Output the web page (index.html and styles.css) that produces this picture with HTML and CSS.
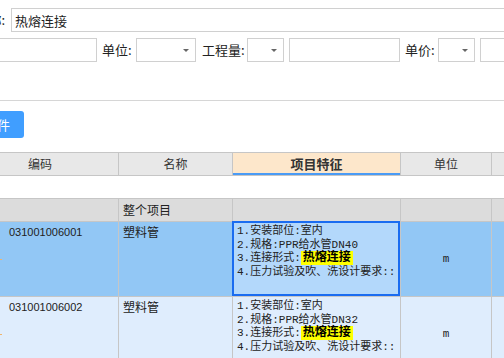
FILE: index.html
```html
<!DOCTYPE html>
<html lang="zh-CN">
<head>
    <meta charset="UTF-8">
    <meta name="viewport" content="width=device-width, initial-scale=1.0">
    <title>清单项目特征</title>
    <link rel="stylesheet" href="styles.css">
</head>
<body>
    <div class="page">
        <div class="form">
            <div class="form-row">
                <label class="lbl lbl-name">项目名称:</label>
                <input class="field field-grow" type="text" value="热熔连接">
            </div>
            <div class="form-row">
                <input class="field f-spec" type="text">
                <label class="lbl l-unit">单位:</label>
                <div class="select s-unit"><span class="caret"></span></div>
                <label class="lbl l-qty">工程量:</label>
                <div class="select s-small"><span class="caret"></span></div>
                <input class="field f-qty" type="text">
                <label class="lbl l-price">单价:</label>
                <div class="select s-small"><span class="caret"></span></div>
                <input class="field field-grow f-price" type="text">
            </div>
        </div>

        <div class="divider"></div>

        <div class="toolbar">
            <button class="btn" type="button">导入文件</button>
        </div>

        <div class="grid">
            <div class="grid-row grid-head">
                <div class="cell c-code">编码</div>
                <div class="cell c-name">名称</div>
                <div class="cell c-feat is-sorted">项目特征</div>
                <div class="cell c-unit">单位</div>
                <div class="cell c-more"></div>
            </div>
            <div class="grid-filter"></div>
            <div class="grid-row grid-group">
                <div class="cell c-code"></div>
                <div class="cell c-name">整个项目</div>
                <div class="cell c-feat"></div>
                <div class="cell c-unit"></div>
                <div class="cell c-more"></div>
            </div>
            <div class="grid-row grid-item is-selected">
                <div class="cell c-code">031001006001</div>
                <div class="cell c-name">塑料管</div>
                <div class="cell c-feat is-current">
                    <div>1.安装部位:室内</div>
                    <div>2.规格:PPR给水管DN40</div>
                    <div>3.连接形式:<mark class="hit">热熔连接</mark></div>
                    <div>4.压力试验及吹、洗设计要求::</div>
                </div>
                <div class="cell c-unit">m</div>
                <div class="cell c-more"></div>
            </div>
            <div class="grid-row grid-item">
                <div class="cell c-code">031001006002</div>
                <div class="cell c-name">塑料管</div>
                <div class="cell c-feat">
                    <div>1.安装部位:室内</div>
                    <div>2.规格:PPR给水管DN32</div>
                    <div>3.连接形式:<mark class="hit">热熔连接</mark></div>
                    <div>4.压力试验及吹、洗设计要求::</div>
                </div>
                <div class="cell c-unit">m</div>
                <div class="cell c-more"></div>
            </div>
        </div>
    </div>
</body>
</html>
```

FILE: styles.css
```css
/* 清单编辑面板 */
body {
    margin: 0;
    padding: 0;
    background: #fff;
    color: #222;
    font-family: "Noto Sans CJK SC", "Liberation Sans", sans-serif;
    overflow: hidden;
}
.page {
    width: 660px;
    margin-left: -60px;
}

/* 表单 */
.form {
    padding-top: 8px;
}
.form-row {
    display: flex;
    align-items: center;
    height: 24px;
}
.form-row + .form-row {
    margin-top: 6px;
}
.lbl {
    font-size: 13px;
    line-height: 24px;
    white-space: nowrap;
}
.lbl-name {
    width: 65px;
    margin-right: 6px;
    text-align: right;
}
.field {
    height: 24px;
    box-sizing: border-box;
    border: 1px solid #d0d0d0;
    padding: 0 3px;
    font: 13px "Noto Sans CJK SC", sans-serif;
    color: #222;
    outline: none;
}
.field-grow {
    flex: 1;
    min-width: 0;
}
.f-spec {
    width: 157px;
}
.l-unit {
    margin-left: 5px;
    width: 34px;
}
.l-qty {
    margin-left: 6px;
    width: 45px;
}
.l-price {
    margin-left: 5px;
    width: 33px;
}
.f-qty {
    width: 111px;
    margin-left: 5px;
}
.f-price {
    margin-left: 5px;
}
.select {
    height: 24px;
    box-sizing: border-box;
    border: 1px solid #d0d0d0;
    display: flex;
    align-items: center;
    justify-content: flex-end;
    padding-right: 6px;
}
.s-unit {
    width: 60px;
}
.s-small {
    width: 37px;
}
.caret {
    width: 0;
    height: 0;
    border-left: 3px solid transparent;
    border-right: 3px solid transparent;
    border-top: 3px solid #666;
}

.divider {
    height: 1px;
    margin-top: 38px;
    background: #d6d6d6;
}

/* 按钮 */
.toolbar {
    margin-top: 10px;
    padding-left: 4px;
}
.btn {
    height: 27px;
    padding: 0 14px;
    border: none;
    border-radius: 3px;
    background: #409eff;
    color: #fff;
    font: 13px "Noto Sans CJK SC", sans-serif;
}

/* 表格 */
.grid {
    margin-top: 14px;
    margin-left: 20px;
}
.grid-row {
    display: flex;
}
.cell {
    box-sizing: border-box;
    border-right: 1px solid #c6c6c6;
    border-bottom: 1px solid #c6c6c6;
    flex: none;
    overflow: hidden;
    position: relative;
}
.c-code { width: 159px; }
.c-name { width: 114px; }
.c-feat { width: 168px; }
.c-unit { width: 91px; }
.c-more { width: 100px; }

.grid-head .cell {
    height: 24px;
    border-top: 1px solid #c6c6c6;
    background: #e8e8e8;
    font-size: 12px;
    line-height: 22px;
    color: #333;
    text-align: center;
}
.grid-head .c-code {
    text-align: left;
    padding-left: 68px;
}
.grid-head .is-sorted {
    background: #fde7cb;
    font-weight: bold;
    font-size: 13px;
    box-shadow: inset 0 -2px 0 #4a9bf5;
}

.grid-filter {
    height: 23px;
    box-sizing: border-box;
    border-bottom: 1px solid #c6c6c6;
}

.grid-group .cell {
    height: 23px;
    background: #dcdcdc;
    font-size: 12px;
    line-height: 22px;
    padding-left: 4px;
}

.grid-item .cell {
    height: 75px;
    background: #dfedfd;
    padding: 3px 4px 0;
    font-size: 12px;
    line-height: 14px;
}
.grid-item.is-selected .cell {
    background: #92c7f5;
}
.grid-item .c-code {
    padding-left: 49px;
    font: 11px/14px "Liberation Sans", sans-serif;
}
.grid-item .c-code::before {
    content: "";
    position: absolute;
    left: 38px;
    top: 37px;
    width: 4px;
    height: 1px;
    background: #f0b46c;
}
.grid-item .c-feat {
    font: 11px/13.5px "Liberation Mono", "Noto Sans CJK SC", monospace;
    white-space: nowrap;
}
.grid-item.is-selected .c-feat {
    background: #b3d8fb;
}
.grid-item .c-feat.is-current {
    overflow: visible;
}
.grid-item .c-feat.is-current::after {
    content: "";
    position: absolute;
    top: -1px;
    left: -1px;
    right: 0;
    bottom: 0;
    border: 2px solid #1a6cf0;
}
.grid-item .c-unit {
    display: flex;
    align-items: center;
    justify-content: center;
    padding: 0;
    color: #222;
    font: 11px "Liberation Mono", monospace;
}
.hit {
    background: #ffff00;
    color: #000;
    font-weight: bold;
    font-size: 12px;
    padding: 0 2px;
}
```
